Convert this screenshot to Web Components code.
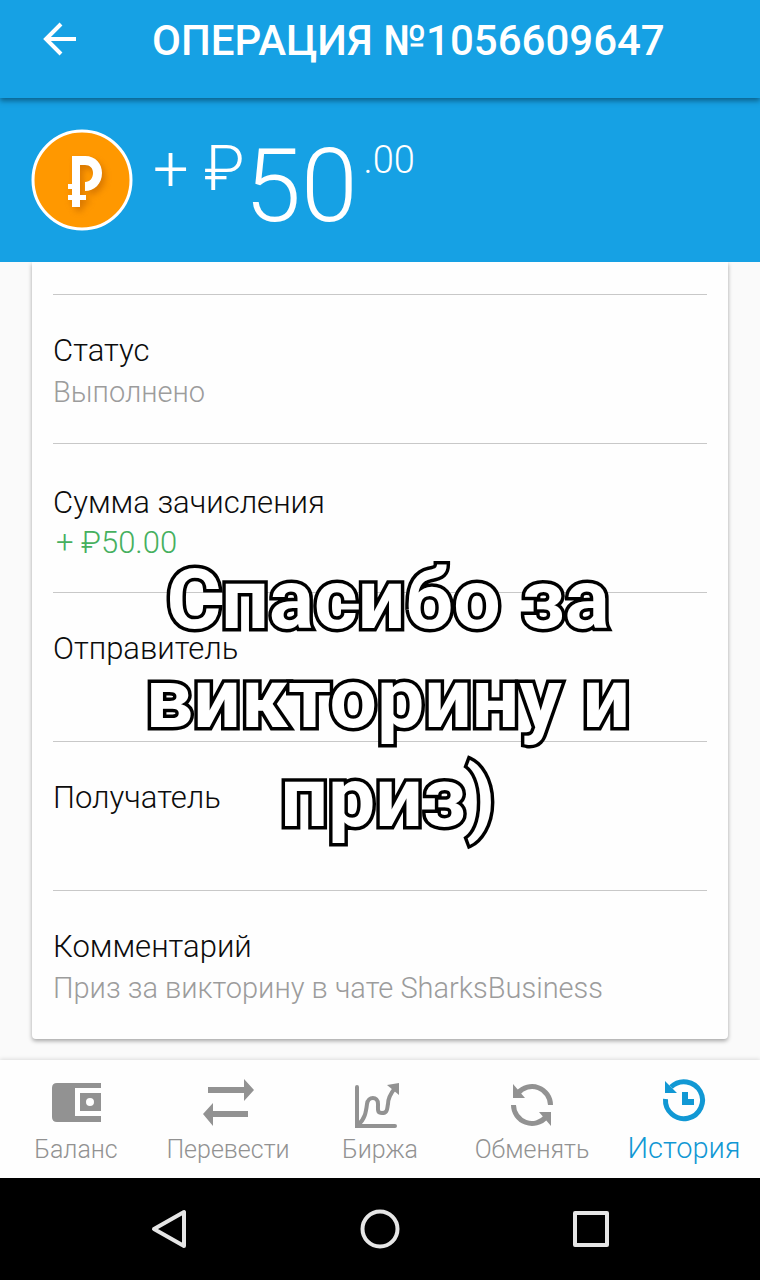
<!DOCTYPE html>
<html lang="ru">
<head>
<meta charset="utf-8">
<meta name="viewport" content="width=device-width, initial-scale=1">
<title>Операция №1056609647</title>
<style>
  body {
    margin: 0;
    font-family: Roboto, "Noto Sans", sans-serif;
    font-weight: 300;
    color: #0c0c0c;
    background: #fafafa;
  }
</style>
</head>
<body>
<wallet-app>
  <app-header slot="header">ОПЕРАЦИЯ №1056609647</app-header>
  <amount-summary slot="header" sign="+ ₽" whole="50" cents=".00"></amount-summary>

  <detail-card>
    <detail-row label="Статус">Выполнено</detail-row>
    <detail-row label="Сумма зачисления" kind="income">+ ₽50.00</detail-row>
    <detail-row label="Отправитель"></detail-row>
    <detail-row label="Получатель"></detail-row>
    <detail-row label="Комментарий">Приз за викторину в чате SharksBusiness</detail-row>
  </detail-card>
  <photo-caption slot="overlay">Спасибо за викторину и приз)</photo-caption>

  <tab-bar slot="footer">
    <tab-item icon="wallet">Баланс</tab-item>
    <tab-item icon="transfer">Перевести</tab-item>
    <tab-item icon="chart">Биржа</tab-item>
    <tab-item icon="exchange">Обменять</tab-item>
    <tab-item icon="history" active>История</tab-item>
  </tab-bar>
  <system-keys slot="footer"></system-keys>
</wallet-app>

<script>
const ICONS = {
  wallet: `
    <path fill="currentColor" fill-rule="evenodd" d="M7 7H51V12H25V40H51V46H7Q2 46 2 41V12Q2 7 7 7ZM30 17H51V35H30ZM40 22A4 4 0 1 0 40 30A4 4 0 1 0 40 22Z"/>`,
  transfer: `
    <path fill="currentColor" d="M6 11H42V3L52 14L42 25V17H6ZM46 35H11V27L1 38L11 50V41H46Z"/>`,
  chart: `
    <g fill="none" stroke="currentColor" stroke-width="4" stroke-linecap="round">
      <path d="M3 11V50H41"/>
      <path d="M4 49C11 43 12 36 13 28C14 20 24 20 24 28C24 34 23 37 28 37C34 37 33 32 34 28C34 22 37 17 41 12"/>
    </g>
    <path fill="currentColor" d="M33 9L45 7V19Z"/>`,
  exchange: `
    <path fill="none" stroke="currentColor" stroke-width="5" d="M12 17A18.5 18.5 0 0 1 44.5 29M7.5 29A18.5 18.5 0 0 0 40 41"/>
    <path fill="currentColor" d="M7 8V22H19ZM45 50V36H33Z"/>`,
  history: `
    <path fill="none" stroke="currentColor" stroke-width="5" d="M13 11A18.5 18.5 0 1 1 7.5 23"/>
    <path fill="currentColor" d="M7 5V17H19ZM24 16H30V23H36V29H24Z"/>`
};

class WalletApp extends HTMLElement {
  constructor() {
    super();
    this.attachShadow({ mode: "open" }).innerHTML = `
      <style>
        :host {
          display: flex;
          flex-direction: column;
          min-height: 100vh;
        }
        main {
          position: relative;
          flex: 1;
          padding: 0 32px 20px;
          background: #fafafa;
        }
      </style>
      <slot name="header"></slot>
      <main>
        <slot></slot>
        <slot name="overlay"></slot>
      </main>
      <slot name="footer"></slot>
    `;
  }
}

class AppHeader extends HTMLElement {
  constructor() {
    super();
    this.attachShadow({ mode: "open" }).innerHTML = `
      <style>
        :host {
          display: block;
          position: relative; /* keeps the shadow above the summary */
          z-index: 1;
          background: #16a1e4;
          color: #fff;
          box-shadow: 0 3px 5px rgba(0, 40, 60, 0.5);
        }
        header {
          display: flex;
          align-items: flex-start;
          gap: 66px;
          padding: 12px 32px 28px;
        }
        button {
          display: flex;
          padding: 0;
          border: 0;
          background: none;
          color: inherit;
          cursor: pointer;
        }
        svg {
          width: 54px;
          height: 54px;
        }
        h1 {
          margin: 0;
          font-size: 42px;
          line-height: 58px;
          font-weight: 500;
          white-space: nowrap;
        }
      </style>
      <header>
        <button type="button" aria-label="Назад">
          <svg viewBox="0 0 54 54">
            <path fill="none" stroke="currentColor" stroke-width="4" d="M44 27H14M29 12L14 27L29 42"/>
          </svg>
        </button>
        <h1><slot></slot></h1>
      </header>
    `;
  }
}

class AmountSummary extends HTMLElement {
  constructor() {
    super();
    this.attachShadow({ mode: "open" });
  }

  connectedCallback() {
    this.shadowRoot.innerHTML = `
      <style>
        :host {
          display: flex;
          align-items: flex-start;
          gap: 20px;
          padding: 31px;
          background: #16a1e4;
          color: #fff;
        }
        .coin {
          flex: none;
          width: 102px;
          height: 102px;
        }
        .amount {
          display: flex;
          align-items: flex-start;
          margin-top: 4px;
          height: 98px;
        }
        .sign {
          font-size: 63px;
          line-height: 72px;
          white-space: pre;
        }
        .whole {
          font-size: 102px;
          line-height: 106px;
        }
        .cents {
          margin-left: 6px;
          font-size: 38px;
          line-height: 54px;
        }
      </style>
      <svg class="coin" viewBox="0 0 102 102" aria-hidden="true">
        <defs>
          <filter id="soft" x="-50%" y="-50%" width="200%" height="200%">
            <feGaussianBlur stdDeviation="3"/>
          </filter>
          <path id="ruble" d="M41 27H54C65 27 71 35 71 44C71 55 63 62 54 62V53C59 53 62 49 62 44C62 39 59 36 54 36H49V66H55V71H49V78H41V71H37V66H41V60H37V55H41Z"/>
        </defs>
        <circle cx="51" cy="51" r="49" fill="#ff9800" stroke="#fff" stroke-width="3"/>
        <use href="#ruble" x="3" y="4" fill="#c96a00" opacity="0.7" filter="url(#soft)"/>
        <use href="#ruble" fill="#fff"/>
      </svg>
      <div class="amount">
        <span class="sign">${this.getAttribute("sign")}</span>
        <span class="whole">${this.getAttribute("whole")}</span>
        <span class="cents">${this.getAttribute("cents")}</span>
      </div>
    `;
  }
}

class DetailCard extends HTMLElement {
  constructor() {
    super();
    this.attachShadow({ mode: "open" }).innerHTML = `
      <style>
        :host {
          display: block;
          padding: 32px 21px 0;
          background: #fefefe;
          border-radius: 0 0 4px 4px;
          box-shadow: 0 2px 4px rgba(0, 0, 0, 0.35);
          clip-path: inset(0 -10px -10px); /* the card slides under the header */
        }
      </style>
      <slot></slot>
    `;
  }
}

class DetailRow extends HTMLElement {
  constructor() {
    super();
    this.attachShadow({ mode: "open" });
  }

  connectedCallback() {
    this.shadowRoot.innerHTML = `
      <style>
        :host {
          display: block;
          box-sizing: border-box;
          min-height: 149px;
          padding-top: 36px;
          border-top: 1px solid #c8c8c8;
        }
        .label {
          font-size: 31px;
          line-height: 40px;
        }
        .value {
          font-size: 29px;
          line-height: 42px;
          color: #9c9c9c;
        }
        :host([kind="income"]) {
          padding-top: 39px;
        }
        :host([kind="income"]) .value {
          padding-left: 3px;
          font-size: 31px;
          line-height: 40px;
          color: #46b05e;
        }
      </style>
      <div class="label">${this.getAttribute("label")}</div>
      <div class="value"><slot></slot></div>
    `;
  }
}

class PhotoCaption extends HTMLElement {
  constructor() {
    super();
    this.attachShadow({ mode: "open" }).innerHTML = `
      <style>
        :host {
          position: absolute;
          top: 288px;
          left: 16px;
          right: 0;
          display: flex;
          justify-content: center;
          pointer-events: none;
        }
        p {
          margin: 0;
          max-width: 560px;
          font-size: 84px;
          line-height: 99px;
          font-weight: 700;
          text-align: center;
          color: #fff;
          -webkit-text-stroke: 7px #000;
          paint-order: stroke fill;
        }
      </style>
      <p><slot></slot></p>
    `;
  }
}

class TabBar extends HTMLElement {
  constructor() {
    super();
    this.attachShadow({ mode: "open" }).innerHTML = `
      <style>
        :host {
          display: block;
          position: relative;
          background: #fefefe;
          box-shadow: 0 -1px 4px rgba(0, 0, 0, 0.12);
        }
        nav {
          display: grid;
          grid-template-columns: repeat(5, 1fr);
        }
      </style>
      <nav><slot></slot></nav>
    `;
  }
}

class TabItem extends HTMLElement {
  constructor() {
    super();
    this.attachShadow({ mode: "open" });
  }

  connectedCallback() {
    this.shadowRoot.innerHTML = `
      <style>
        :host {
          display: block;
          color: #929292;
        }
        :host([active]) {
          color: #1198d4;
        }
        a {
          display: flex;
          flex-direction: column;
          align-items: center;
          gap: 6px;
          padding: 16px 0 12px;
          color: inherit;
          text-decoration: none;
          font-size: 25px;
          line-height: 32px;
          white-space: nowrap;
        }
        :host([active]) a {
          font-size: 29px;
          line-height: 28px;
        }
        svg {
          width: 52px;
          height: 52px;
          overflow: visible;
        }
      </style>
      <a href="#${this.getAttribute("icon")}">
        <svg viewBox="0 0 52 52" aria-hidden="true">${ICONS[this.getAttribute("icon")]}</svg>
        <span><slot></slot></span>
      </a>
    `;
  }
}

class SystemKeys extends HTMLElement {
  constructor() {
    super();
    this.attachShadow({ mode: "open" }).innerHTML = `
      <style>
        :host {
          display: grid;
          grid-template-columns: repeat(3, 1fr);
          position: relative;
          padding: 0 64px;
          background: #000;
        }
        button {
          display: flex;
          justify-content: center;
          padding: 31px 0;
          border: 0;
          background: none;
          color: #e6e6e6;
        }
        svg {
          width: 40px;
          height: 40px;
          fill: none;
          stroke: currentColor;
          stroke-width: 4;
          stroke-linejoin: round;
        }
      </style>
      <button type="button" aria-label="Назад">
        <svg viewBox="0 0 40 40"><path d="M35 3V37L5 20Z"/></svg>
      </button>
      <button type="button" aria-label="Домой">
        <svg viewBox="0 0 40 40"><circle cx="20" cy="20" r="17.5"/></svg>
      </button>
      <button type="button" aria-label="Недавние">
        <svg viewBox="0 0 40 40"><rect x="4" y="4" width="32" height="32"/></svg>
      </button>
    `;
  }
}

window.customElements.define("wallet-app", WalletApp);
window.customElements.define("app-header", AppHeader);
window.customElements.define("amount-summary", AmountSummary);
window.customElements.define("detail-card", DetailCard);
window.customElements.define("detail-row", DetailRow);
window.customElements.define("photo-caption", PhotoCaption);
window.customElements.define("tab-bar", TabBar);
window.customElements.define("tab-item", TabItem);
window.customElements.define("system-keys", SystemKeys);
</script>
</body>
</html>
